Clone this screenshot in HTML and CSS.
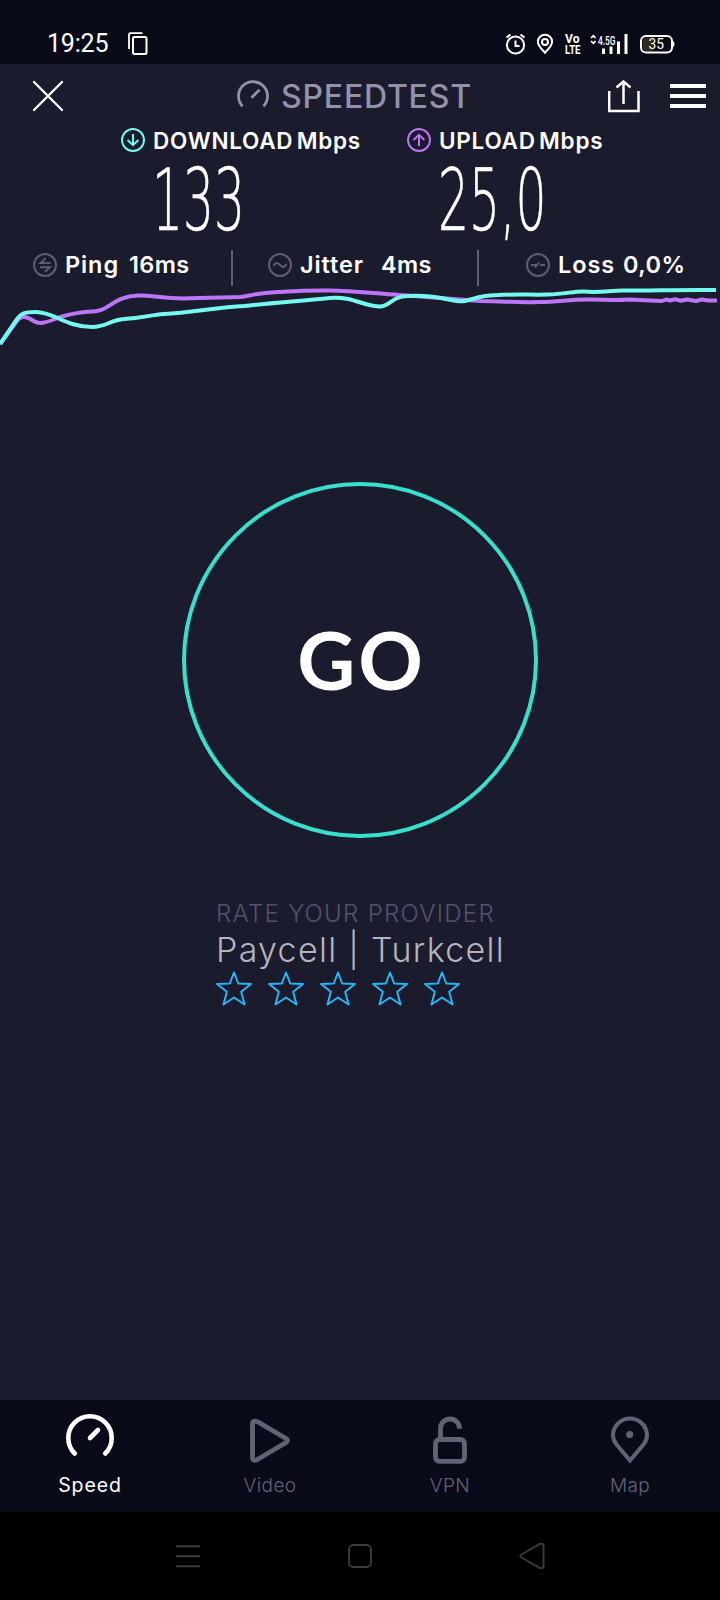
FILE: index.html
```html
<!DOCTYPE html>
<html lang="en">
<head>
<meta charset="utf-8">
<title>Speedtest</title>
<link rel="stylesheet" href="styles.css">
</head>
<body>
<div class="phone">
  <div class="status">
    <span class="clock">19:25</span>
    <svg class="copy" width="20" height="24" viewBox="0 0 20 24"><path d="M1 17V2.500Q1 1.200 2.500 1.200H14.500" fill="none" stroke="#fff" stroke-width="1.800"/><rect x="5" y="5" width="13.500" height="17" rx="1.500" fill="none" stroke="#fff" stroke-width="2"/></svg>
    <svg class="status-icons" width="170" height="24" viewBox="505 32 170 24">
      <g fill="none" stroke="#fff" stroke-width="2">
        <circle cx="515.500" cy="45" r="8.600"/><path d="M515.500 40.500V46H519.500M506.500 37.500L510.500 34.500M524.500 37.500L520.500 34.500"/>
        <path d="M545 52.700C542 49.500 537.900 46 537.900 41.800A7.100 7.100 0 0 1 552.100 41.800C552.100 46 548 49.500 545 52.700Z"/><circle cx="545" cy="42" r="3"/>
        <path d="M591 38L593.300 35.800L595.600 38M591 41L593.300 43.200L595.600 41" stroke-width="1.700"/>
        <rect x="641" y="36" width="31" height="16.500" rx="5"/>
      </g>
      <path d="M642.500 39Q644 37.500 647 37.500H653V51H647Q643 51 642.500 48Z" fill="#302b20"/>
      <path d="M672.800 40.500Q674.500 42 674.500 44T672.800 47.500Z" fill="#fff"/>
      <g class="mini">
        <text x="565" y="43.300" font-size="12.500" textLength="14.500" lengthAdjust="spacingAndGlyphs">Vo</text>
        <text x="565" y="54" font-size="12.500" textLength="15.500" lengthAdjust="spacingAndGlyphs">LTE</text>
        <text class="net" x="598" y="45" font-size="13" textLength="17.500" lengthAdjust="spacingAndGlyphs">4.5G</text>
        <text class="batt" x="648.500" y="49" font-size="15" textLength="15.500" lengthAdjust="spacingAndGlyphs">35</text>
      </g>
      <path d="M602 48.500H605V54H602ZM609.500 46.500H612.500V54H609.500ZM617 41.500H620V54H617ZM624.500 34H627.500V54H624.500Z" fill="#fff"/>
    </svg>
  </div>

  <header class="header">
    <svg class="close" width="32" height="32" viewBox="0 0 32 32"><path d="M2 2L30 30M30 2L2 30" stroke="#fff" stroke-width="2.300" stroke-linecap="round"/></svg>
    <div class="brand">
      <svg width="32" height="28" viewBox="0 0 32 28"><path d="M5.500 26.200A14.500 14.500 0 1 1 26.500 26.200M14.500 17.800L22.500 9.800" fill="none" stroke="#9293ab" stroke-width="2.800"/></svg>
      <span class="wordmark">SPEEDTEST</span>
    </div>
    <svg class="share" width="32" height="33" viewBox="0 0 32 33"><path d="M1.200 11V31H30.500V11M15.500 24V2M8.500 7.500L15.500 1.500L22.500 7.500" fill="none" stroke="#fff" stroke-width="2.500"/></svg>
    <svg class="menu" width="36" height="24" viewBox="0 0 36 24"><path d="M0 2H36M0 12H36M0 22H36" stroke="#fff" stroke-width="4"/></svg>
  </header>

  <section class="results">
    <div class="metric download">
      <div class="metric-label">
        <svg width="24" height="24" viewBox="0 0 24 24"><path d="M12 6V17M6.500 12L12 17.200L17.500 12" fill="none" stroke="#75f9ee" stroke-width="2"/><circle cx="12" cy="12" r="11" fill="none" stroke="#75f9ee" stroke-width="1.900"/></svg>
        <span class="label-text">DOWNLOAD Mbps</span>
      </div>
      <div class="value">133</div>
    </div>
    <div class="metric upload">
      <div class="metric-label">
        <svg width="24" height="24" viewBox="0 0 24 24"><path d="M12 18V7M6.500 12L12 6.800L17.500 12" fill="none" stroke="#c074f3" stroke-width="2"/><circle cx="12" cy="12" r="11" fill="none" stroke="#c074f3" stroke-width="1.900"/></svg>
        <span class="label-text">UPLOAD Mbps</span>
      </div>
      <div class="value">25,0</div>
    </div>
  </section>

  <section class="stats">
    <div class="stat ping">
      <svg width="24" height="24" viewBox="0 0 24 24"><g fill="none" stroke="#5f5f73" stroke-width="1.900"><circle cx="12" cy="12" r="11"/><path d="M17.500 10H7.500L12.500 5.200M7 14.200H17L12 18.800"/></g></svg>
      <span class="name">Ping</span><span>16ms</span>
    </div>
    <div class="stat jitter">
      <svg width="24" height="24" viewBox="0 0 24 24"><g fill="none" stroke="#5f5f73" stroke-width="1.900"><circle cx="12" cy="12" r="11"/><path d="M5.500 13C7.500 9 9.500 9.500 12 12S16.500 15 18.500 11"/></g></svg>
      <span class="name">Jitter</span><span>4ms</span>
    </div>
    <div class="stat loss">
      <svg width="24" height="24" viewBox="0 0 24 24"><g fill="none" stroke="#5f5f73" stroke-width="1.900"><circle cx="12" cy="12" r="11"/><path d="M5 12H10M9 14.500L13 9.500M14 12H19"/></g></svg>
      <span class="name">Loss</span><span>0,0%</span>
    </div>
  </section>

  <svg class="chart" width="720" height="70" viewBox="0 280 720 70">
    <g fill="none" stroke-width="4" stroke-linejoin="round">
      <path stroke="#bd75f7" d="M0 344L14 325C18 319 20 317 24 317C30 317 34 323 40 323C48 323 56 318 62 316.500C74 313 82 312 92 311.500C108 312 114 296 138 295.500C151 295 164 298.500 182 298.500C205 297.500 222 297.500 240 297C250 296 254 293 278 292C295 291 308 290 330 290.500C352 291 370 293 400 295C430 297 455 299 480 301C505 301 515 303 540 302C560 302 570 299 590 299.500C604 300 615 300.500 630 299.500L650 300.500L662 301L666 299.500L670 300.500L675 299.300L681 300.800L687 299.500L696 301L702 299.500L708 300.500H717"/>
      <path stroke="#75f9ee" d="M0 344L15 322C21 313 24 312 36 312C54 312 66 327 92 327C107 327 110 320 124 319C143 318 150 315 164 314C190 313 218 307 244 306C270 303 300 301 330 298C352 296 364 306.500 380 306.500C390 306.500 392 296 408 296C424 295 436 297 446 299C455 301 460 302 465 301C480 297 483 295.500 498 295C515 294 535 295 548 294.500C565 294 575 291 584 291.500C600 293 610 290.500 622 290.500C655 290.500 685 289.500 716 290"/>
    </g>
  </svg>

  <main class="main">
    <div class="go">GO</div>
    <div class="rate">
      <div class="rate-title">RATE YOUR PROVIDER</div>
      <div class="provider">Paycell | Turkcell</div>
      <svg class="stars" width="246" height="36" viewBox="0 0 246 36">
        <defs><path id="star" d="M18 1.500L22.200 12.500L35 13L25.200 20.800L28.500 33.500L18 26.500L7.500 33.500L10.800 20.800L1 13L13.800 12.500Z" fill="none" stroke="#27b5f4" stroke-width="2" stroke-linejoin="round"/></defs>
        <use href="#star"/><use href="#star" x="52"/><use href="#star" x="104"/><use href="#star" x="156"/><use href="#star" x="208"/>
      </svg>
    </div>
  </main>

  <nav class="tabs">
    <div class="tab active"><svg width="60" height="60" viewBox="0 0 60 60"><path d="M14.800 39.500A21.700 21.700 0 1 1 45.200 39.500M30 24L38 16" fill="none" stroke="#fff" stroke-width="4.600" stroke-linecap="round"/></svg><span>Speed</span></div>
    <div class="tab"><svg width="60" height="60" viewBox="0 0 60 60"><path d="M12.500 10.500V43Q12.500 48 17.500 45.500L46 28.500Q49 26.500 46 24.500L17.500 7.700Q12.500 5.500 12.500 10.500Z" fill="none" stroke="#626276" stroke-width="4.800"/></svg><span>Video</span></div>
    <div class="tab"><svg width="60" height="60" viewBox="0 0 60 60"><g fill="none" stroke="#626276" stroke-width="4.800"><rect x="15.500" y="25.500" width="29" height="21.800" rx="4"/><path d="M20.500 25V14.500A9.500 9.500 0 0 1 39.500 14.500V14.800"/></g></svg><span>VPN</span></div>
    <div class="tab"><svg width="60" height="60" viewBox="0 0 60 60"><path d="M30 46.500L16.500 30.500Q13 26 13 21.500A17 17 0 0 1 47 21.500Q47 26 43.500 30.500Z" fill="none" stroke="#626276" stroke-width="4"/><circle cx="29.700" cy="20.500" r="3.600" fill="#626276"/></svg><span>Map</span></div>
  </nav>

  <div class="sysnav">
    <svg width="24" height="26" viewBox="0 0 24 26"><path d="M0 3.300H24M0 13.300H24M0 23.300H24" stroke="#3c3c3c" stroke-width="2"/></svg>
    <svg width="24" height="26" viewBox="0 0 24 26"><rect x="1" y="2" width="22" height="22" rx="4.500" fill="none" stroke="#3c3c3c" stroke-width="1.900"/></svg>
    <svg width="26" height="28" viewBox="0 0 26 28"><path d="M2.500 12.500L21 2Q24.500 1 24.500 4V24Q24.500 27 21 26L2.500 15.500Q0 14 2.500 12.500Z" fill="none" stroke="#3c3c3c" stroke-width="1.900"/></svg>
  </div>
</div>
</body>
</html>
```
FILE: styles.css
```css
* { box-sizing: border-box; }
body { margin: 0; background: #1b1b2e; }
svg { display: block; flex: none; }
.phone {
  width: 720px; height: 1600px; overflow: hidden;
  display: flex; flex-direction: column;
  background: #1b1b2e; color: #fff;
  font-family: Inter, "Liberation Sans", sans-serif;
  white-space: nowrap;
}
.status { height: 64px; background: #090b18; display: flex; align-items: flex-start; padding: 32px 45px 0 47px; }
.clock { width: 81px; font: 400 25px/23px Roboto, sans-serif; letter-spacing: -0.2px; }
.status-icons { margin-left: auto; }
.mini { fill: #fff; font-family: Roboto, sans-serif; font-weight: 700; }
.mini .net { font-weight: 500; }
.mini .batt { font-weight: 400; }

.header { height: 60px; display: flex; align-items: flex-start; padding: 16px 14px 0 32px; }
.brand { display: flex; gap: 12px; margin-left: 173px; width: 371px; }
.wordmark { color: #9293ab; font-weight: 500; font-size: 32px; line-height: 33px; letter-spacing: 0.8px; }
.menu { margin: 4px 0 0 30px; }

.results { height: 124px; display: grid; grid-template-columns: 286px 1fr; padding: 4px 0 0 121px; }
.metric-label { display: flex; gap: 8px; height: 24px; }
.label-text { font-weight: 600; font-size: 22.500px; line-height: 26px; letter-spacing: 0.75px; word-spacing: -3px; }
.value {
  font: 200 85px/64px "DejaVu Sans", sans-serif;
  transform: scaleX(.574); transform-origin: 0 0;
  margin: 17px 0 0 31px;
  -webkit-text-stroke: 0.6px #fff;
}

.stats { height: 38px; display: grid; grid-template-columns: 233px 246px 241px; font-weight: 600; font-size: 23.500px; letter-spacing: 0.4px; }
.stat { display: flex; height: 36px; margin-top: 2px; padding-top: 3px; line-height: 24px; }
.stat svg { margin-right: 8px; }
.ping { padding-left: 33px; border-right: 2px solid #5f5f73; }
.jitter { padding-left: 35px; border-right: 2px solid #5f5f73; }
.loss { padding-left: 47px; }
.name { letter-spacing: 0.9px; }
.ping .name { width: 64px; }
.jitter .name { width: 81px; }
.loss .name { width: 65px; }
.chart { margin-top: -6px; }

.main { flex: 1; display: flex; flex-direction: column; align-items: center; padding-top: 132px; }
.go {
  width: 356px; height: 356px; border: 4px solid #37dfcc; border-radius: 50%;
  display: flex; align-items: center; justify-content: center;
  font: 700 80px/1 Lato, sans-serif; letter-spacing: 3px; padding: 0 0 2px 3px;
}
.rate { width: 288px; margin-top: 61px; }
.rate-title { color: #53536a; font-weight: 300; font-size: 24px; line-height: 30px; letter-spacing: 1.3px; }
.provider { color: #b4b4bf; font-weight: 300; font-size: 34px; line-height: 42px; letter-spacing: 1.3px; }

.tabs { height: 112px; background: #090b18; display: grid; grid-template-columns: repeat(4, 1fr); padding-top: 14px; }
.tab { display: flex; flex-direction: column; align-items: center; font-size: 19px; line-height: 23px; color: #626276; font-weight: 300; letter-spacing: 0.4px; }
.tab.active { color: #fff; font-weight: 400; font-size: 19.500px; letter-spacing: 0.9px; }
.sysnav { height: 88px; background: #000; display: flex; align-items: center; justify-content: space-between; padding: 0 175px 0 176px; }
```
